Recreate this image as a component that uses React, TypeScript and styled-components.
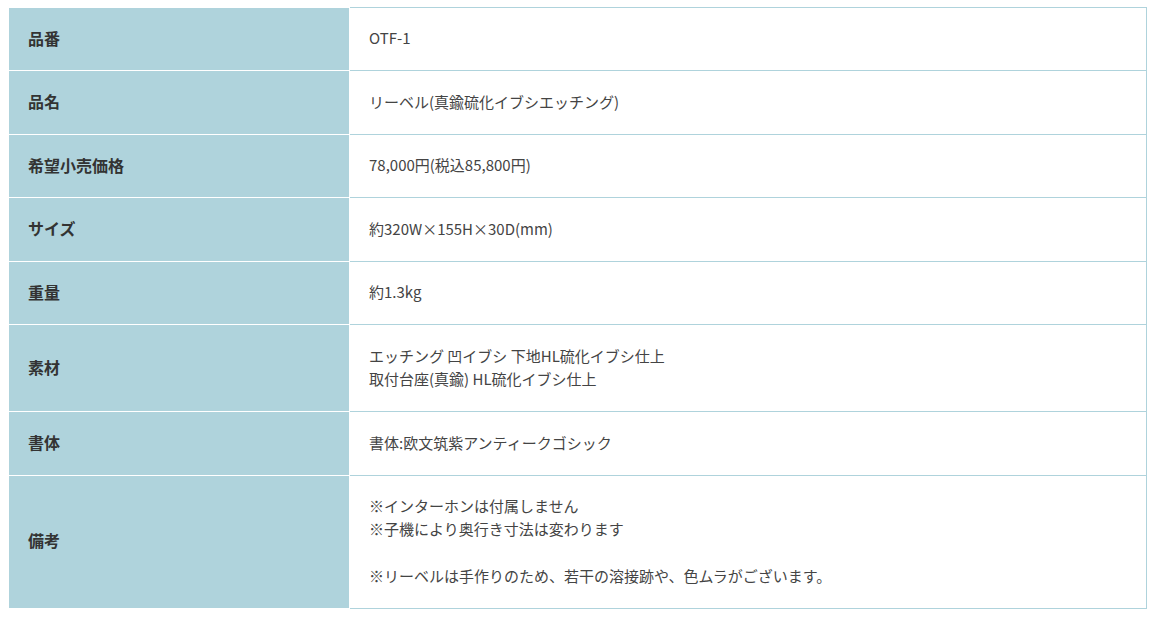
import React from "react";
import styled, { createGlobalStyle } from "styled-components";

const Global = createGlobalStyle`
  html, body { margin: 0; padding: 0; background: #fff; }
  body {
    font-family: "Noto Sans CJK JP", "Noto Sans", sans-serif;
    font-size: 15px;
  }
`;

const Page = styled.div`
  padding: 7px 8px 6px;
`;

const Table = styled.table`
  width: 100%;
  border-collapse: collapse;
  table-layout: fixed;
`;

const Head = styled.th`
  width: 302px;
  background: #afd3dc;
  border: 1px solid #ffffff;
  padding: 18.6px 19px 20.6px;
  text-align: left;
  vertical-align: middle;
  font-size: 16px;
  font-weight: 700;
  color: #333333;
  line-height: 23px;
`;

const Cell = styled.td`
  border: 1px solid #afd3dc;
  padding: 18.4px 19px 20.8px 19px;
  vertical-align: middle;
  color: #444444;
  line-height: 23.3px;
`;

const Line = styled.div`
  min-height: 23.3px;
`;

const rows: { label: string; lines: string[] }[] = [
  { label: "品番", lines: ["OTF-1"] },
  { label: "品名", lines: ["リーベル(真鍮硫化イブシエッチング)"] },
  { label: "希望小売価格", lines: ["78,000円(税込85,800円)"] },
  { label: "サイズ", lines: ["約320W×155H×30D(mm)"] },
  { label: "重量", lines: ["約1.3kg"] },
  {
    label: "素材",
    lines: ["エッチング 凹イブシ 下地HL硫化イブシ仕上", "取付台座(真鍮) HL硫化イブシ仕上"],
  },
  { label: "書体", lines: ["書体:欧文筑紫アンティークゴシック"] },
  {
    label: "備考",
    lines: [
      "※インターホンは付属しません",
      "※子機により奥行き寸法は変わります",
      "",
      "※リーベルは手作りのため、若干の溶接跡や、色ムラがございます。",
    ],
  },
];

export default function App() {
  return (
    <Page>
      <Global />
      <Table>
        <tbody>
          {rows.map((r) => (
            <tr key={r.label}>
              <Head>{r.label}</Head>
              <Cell>
                {r.lines.map((l, i) => (
                  <Line key={i}>{l}</Line>
                ))}
              </Cell>
            </tr>
          ))}
        </tbody>
      </Table>
    </Page>
  );
}
